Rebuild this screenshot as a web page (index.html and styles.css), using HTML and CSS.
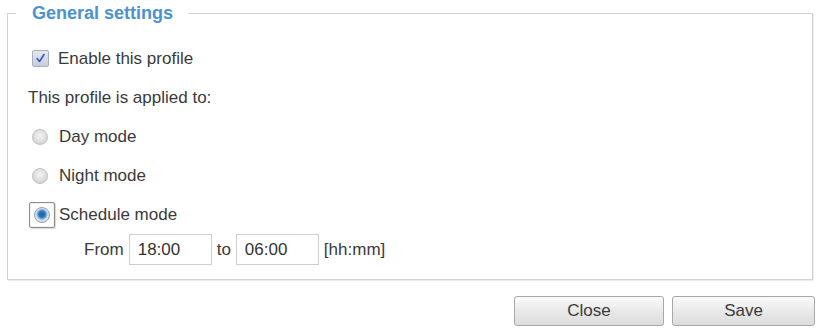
FILE: index.html
```html
<!DOCTYPE html>
<html>
<head>
<meta charset="utf-8">
<link rel="stylesheet" href="styles.css">
</head>
<body>
<fieldset class="panel">
  <legend class="panel-title">General settings</legend>
  <div class="panel-body">
    <div class="row">
      <span class="check"><svg width="11" height="11" viewBox="0 0 11 11"><path d="M2 5.5 L4.5 8.5 L9 1.5" fill="none" stroke="#2f5dc4" stroke-width="1.6" stroke-linecap="round" stroke-linejoin="round"/></svg></span>
      <span class="label">Enable this profile</span>
    </div>
    <div class="row row-note"><span>This profile is applied to:</span></div>
    <div class="row"><span class="radio"></span><span class="label-r">Day mode</span></div>
    <div class="row"><span class="radio"></span><span class="label-r">Night mode</span></div>
    <div class="row"><span class="focus-box"><span class="radio radio-on"></span></span><span class="label-f">Schedule mode</span></div>
    <div class="time-row">
      <span>From</span>
      <span class="field">18:00</span>
      <span>to</span>
      <span class="field">06:00</span>
      <span>[hh:mm]</span>
    </div>
  </div>
</fieldset>
<div class="actions">
  <button class="btn btn-close">Close</button>
  <button class="btn btn-save">Save</button>
</div>
</body>
</html>
```
FILE: styles.css
```css
html, body {
  margin: 0;
  padding: 0;
  background: #fff;
}
body {
  font-family: "Liberation Sans", Arial, sans-serif;
  font-size: 17px;
  color: #3a3a3a;
  width: 817px;
  height: 329px;
  overflow: hidden;
}
.panel {
  box-sizing: border-box;
  margin: 1px 0 0 7px;
  width: 806px;
  padding: 0;
  border: 1px solid #d2d2d2;
  box-shadow: 1px 1px 0 #ececec;
  min-width: 0;
}
.panel-title {
  margin-left: 8px;
  padding: 0 15px 0 16px;
  font-weight: bold;
  font-size: 18px;
  line-height: 24px;
  color: #4b92d4;
}
.panel-body {
  padding: 14px 0 14px 24px;
}
.row {
  height: 39px;
  display: flex;
  align-items: center;
}
.row-note {
  margin-left: -4px;
}
.check {
  box-sizing: border-box;
  width: 17px;
  height: 17px;
  border: 1px solid #a9b0bd;
  border-radius: 2px;
  background: linear-gradient(#e4e8f0, #c6cdda);
  display: flex;
  align-items: center;
  justify-content: center;
}
.label {
  margin-left: 9px;
}
.radio {
  box-sizing: border-box;
  width: 16px;
  height: 16px;
  border-radius: 50%;
  border: 1px solid #c0c0c0;
  background: radial-gradient(circle at 50% 40%, #f4f4f4 0, #e2e2e2 45%, #c9c9c9 100%);
}
.focus-box {
  box-sizing: border-box;
  width: 26px;
  height: 26px;
  margin-left: -3px;
  border: 1px solid #8e8e8e;
  border-radius: 2px;
  box-shadow: inset 0 0 0 1px #f2f2f2, 1px 1px 1px #d8d8d8;
  display: flex;
  align-items: center;
  justify-content: center;
}
.radio-on {
  border-color: #8aa3bd;
  background: radial-gradient(circle at 50% 45%, #1f5fa8 0, #2e74bd 3px, #7ea8d2 4.5px, #d7e3ef 6px, #c8d2dc 100%);
}
.label-r {
  margin-left: 11px;
}
.label-f {
  margin-left: 4px;
}
.time-row {
  display: flex;
  align-items: center;
  height: 31px;
  padding-left: 52px;
  gap: 5px;
}
.field {
  box-sizing: border-box;
  width: 83px;
  height: 31px;
  border: 1px solid #cfcfcf;
  padding-left: 8px;
  display: flex;
  align-items: center;
  color: #333;
}
.actions {
  display: flex;
  justify-content: flex-end;
  gap: 8px;
  margin-top: 16px;
  padding-right: 2px;
}
.btn {
  box-sizing: border-box;
  height: 30px;
  font-family: "Liberation Sans", Arial, sans-serif;
  font-size: 17px;
  color: #3a3a3a;
  border: 1px solid #a8a8a8;
  border-radius: 3px;
  background: linear-gradient(#fafafa, #e9e9e9 50%, #dcdcdc);
  padding: 0;
}
.btn-close {
  width: 150px;
}
.btn-save {
  width: 143px;
}
```
